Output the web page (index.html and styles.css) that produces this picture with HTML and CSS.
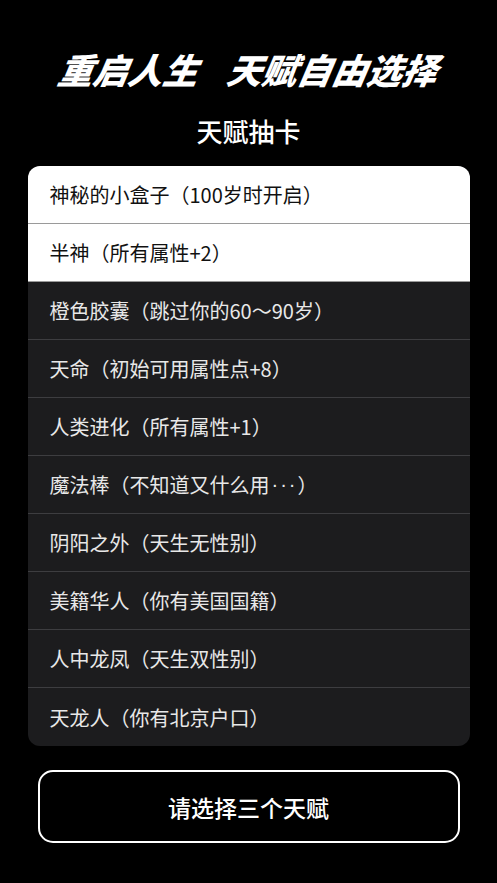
FILE: index.html
```html
<!DOCTYPE html>
<html lang="zh-CN">
<head>
<meta charset="utf-8">
<title>天赋抽卡</title>
<link rel="stylesheet" href="styles.css">
</head>
<body>
<main class="page">
  <h1 class="headline"><span>重启人生</span><span>天赋自由选择</span></h1>
  <h2 class="subtitle">天赋抽卡</h2>
  <ul class="talents">
    <li class="talent selected">神秘的小盒子（100岁时开启）</li>
    <li class="talent selected">半神（所有属性+2）</li>
    <li class="talent">橙色胶囊（跳过你的60～90岁）</li>
    <li class="talent">天命（初始可用属性点+8）</li>
    <li class="talent">人类进化（所有属性+1）</li>
    <li class="talent">魔法棒（不知道又什么用<span class="dots">···</span>）</li>
    <li class="talent">阴阳之外（天生无性别）</li>
    <li class="talent">美籍华人（你有美国国籍）</li>
    <li class="talent">人中龙凤（天生双性别）</li>
    <li class="talent">天龙人（你有北京户口）</li>
  </ul>
  <button class="confirm" type="button">请选择三个天赋</button>
</main>
</body>
</html>
```

FILE: styles.css
```css
* { box-sizing: border-box; }
html, body {
  margin: 0;
  padding: 0;
  background: #000;
}
body {
  font-family: "Noto Sans CJK SC", "Noto Sans", sans-serif;
  color: #fff;
}
.page {
  width: 497px;
  height: 883px;
  display: flex;
  flex-direction: column;
  align-items: center;
  padding-top: 48px;
}
.headline {
  margin: 0;
  height: 42px;
  display: flex;
  gap: 29px;
  font-size: 35px;
  line-height: 42px;
  font-weight: 900;
  font-style: italic;
  letter-spacing: 0;
  transform: skewX(-10deg);
}
.subtitle {
  margin: 23px 0 0;
  height: 36px;
  font-size: 26px;
  line-height: 36px;
  font-weight: 500;
}
.talents {
  list-style: none;
  margin: 17px 0 0;
  padding: 0;
  width: 442px;
  border-radius: 12px;
  overflow: hidden;
  background: #1c1c1e;
}
.talent {
  height: 58px;
  display: flex;
  align-items: center;
  padding-left: 22px;
  font-size: 20px;
  color: #e8e8e8;
  border-bottom: 1px solid #3d3d40;
}
.talent:last-child { border-bottom: none; }
.talent.selected {
  background: #fff;
  color: #111;
  border-bottom-color: #9a9a9a;
}
.dots {
  font-family: "Liberation Sans", sans-serif;
  letter-spacing: 2px;
  margin-left: 2px;
}
.confirm {
  margin-top: 24px;
  width: 422px;
  height: 73px;
  background: #000;
  border: 2px solid #fff;
  border-radius: 15px;
  color: #fff;
  font-family: inherit;
  font-size: 23px;
  font-weight: 500;
  padding: 0;
}
```
